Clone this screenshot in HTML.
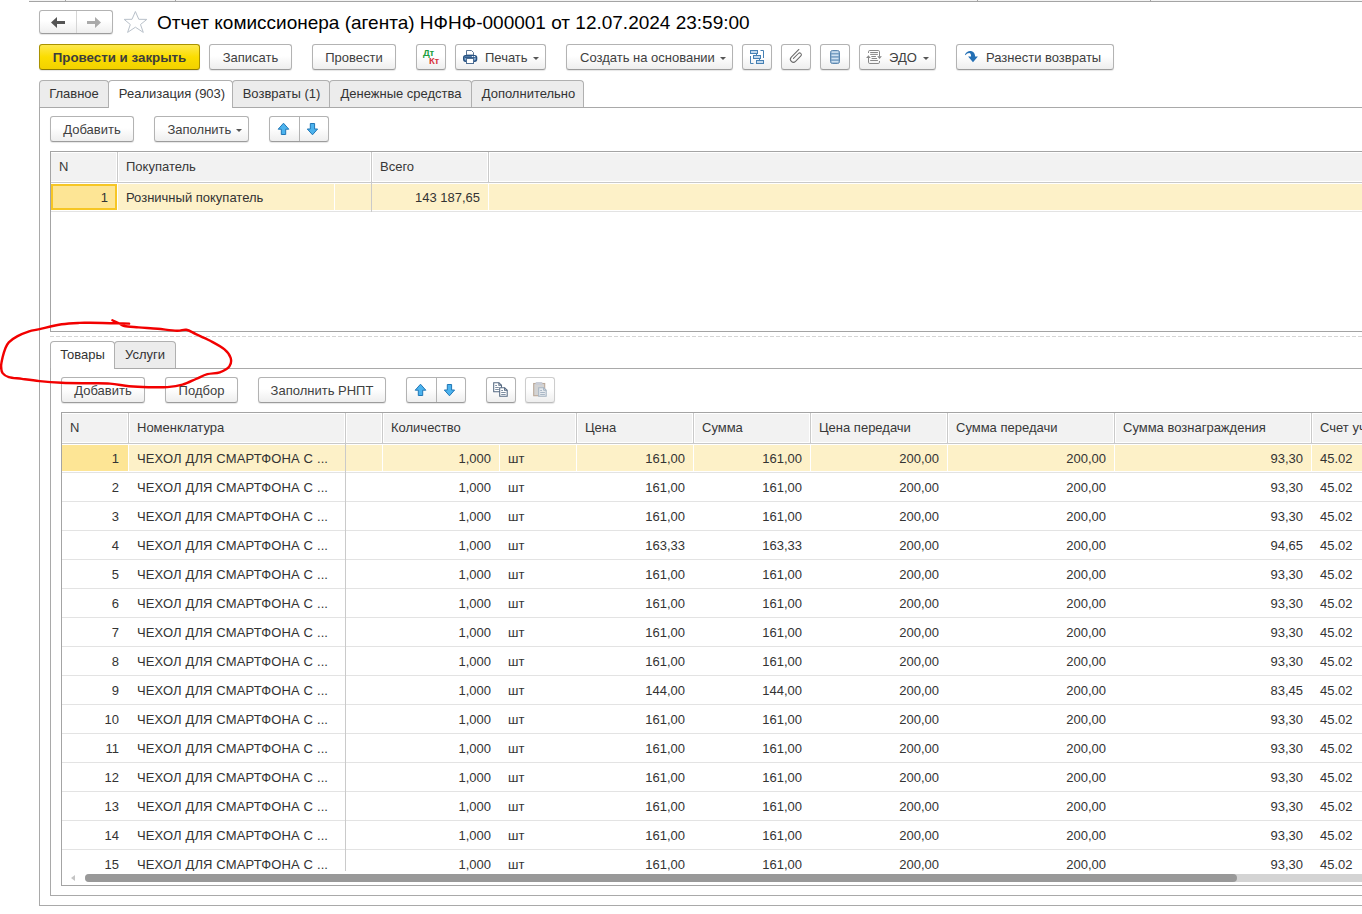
<!DOCTYPE html><html><head><meta charset="utf-8"><style>
*{margin:0;padding:0;box-sizing:border-box}
html,body{width:1362px;height:914px;overflow:hidden;background:#fff;font-family:"Liberation Sans",sans-serif;position:relative}
.a,.t,.title,.th,.td,.btn,.tab{position:absolute}
.title{font-size:19px;color:#000;line-height:24px;white-space:nowrap}
.btn{border:1px solid #b3b3b3;border-bottom-color:#9c9c9c;border-radius:3px;background:linear-gradient(#ffffff 0%,#ffffff 45%,#eeeeee 100%);box-shadow:0 1px 1px rgba(0,0,0,0.10);}
.btn span{position:absolute;left:0;right:0;top:1px;text-align:center;font-size:13px;color:#404040;line-height:24px;white-space:nowrap}
.btn.ybtn{background:linear-gradient(#fde84f 0%,#fbdd00 50%,#f2d100 100%);border-color:#a99200;border-bottom-color:#8f7b00;box-shadow:0 1px 1px rgba(0,0,0,0.10)}
.btn.ybtn span{font-weight:bold;color:#3d3d3d;font-size:13.33px;top:1px}
.btn.dis{border-color:#cdcdcd;border-bottom-color:#bdbdbd}
.btn span.dt{position:absolute;right:auto;left:6px;top:2.5px;font-size:9.5px;letter-spacing:-0.3px;line-height:10px;font-weight:bold;color:#1e9f3d;text-align:left}
.btn span.kt{position:absolute;right:auto;left:12px;top:10.5px;font-size:9.5px;letter-spacing:-0.3px;line-height:10px;font-weight:bold;color:#d8343c;text-align:left}
i.dd{position:absolute;top:12px;width:0;height:0;border-left:3px solid transparent;border-right:3px solid transparent;border-top:3px solid #555}
.tab{border:1px solid #b0b0b0;border-bottom:none;border-radius:4px 4px 0 0;background:#ececec}
.tab.act{background:#fff}
.tab span{position:absolute;left:0;right:0;top:0;text-align:center;font-size:13px;color:#333;line-height:25px;white-space:nowrap}
.th{font-size:13px;color:#383838;line-height:29px;white-space:nowrap}
.td{position:absolute;font-size:13px;color:#333;line-height:30px;white-space:nowrap}
</style></head><body>
<div class="a" style="left:29px;top:0px;width:1333px;height:1px;background:#f4f4f4;"></div>
<div class="a" style="left:29px;top:1px;width:1333px;height:1px;background:#a4a4a4;"></div>
<div class="a" style="left:65px;top:0px;width:1px;height:1px;background:#a4a4a4;"></div>
<div class="a" style="left:175px;top:0px;width:1px;height:1px;background:#a4a4a4;"></div>
<div class="a" style="left:977px;top:0px;width:1px;height:1px;background:#a4a4a4;"></div>
<div class="a" style="left:1150px;top:0px;width:1px;height:1px;background:#a4a4a4;"></div>
<div class="btn" style="left:39px;top:10px;width:74px;height:24px;"></div>
<div class="a" style="left:76px;top:11px;width:1px;height:22px;background:#d6d6d6;"></div>
<svg class="a" style="left:51px;top:17px" width="15" height="12" viewBox="0 0 15 12"><path d="M0,5.5 L6,0 L6,4 L14,4 L14,7 L6,7 L6,11 Z" fill="#555"/></svg>
<svg class="a" style="left:87px;top:17px" width="15" height="12" viewBox="0 0 15 12"><path d="M14,5.5 L8,0 L8,4 L0,4 L0,7 L8,7 L8,11 Z" fill="#aaa"/></svg>
<svg class="a" style="left:115px;top:5px" width="40" height="33" viewBox="0 0 40 33"><path d="M20.4,6.5 L23.8,14.3 L31.8,14.4 L25.5,19.5 L28.3,27.4 L20.4,22.2 L12.6,27.4 L15.3,19.5 L9.2,14.4 L17.0,14.3 Z" fill="none" stroke="#b9c1ca" stroke-width="1" stroke-linejoin="miter"/></svg>
<div class="title" style="left:157px;top:10.5px;">Отчет комиссионера (агента) НФНФ-000001 от 12.07.2024 23:59:00</div>
<div class="btn ybtn" style="left:39px;top:44px;width:161px;height:26px;"><span>Провести и закрыть</span></div>
<div class="btn" style="left:209px;top:44px;width:83px;height:26px;"><span>Записать</span></div>
<div class="btn" style="left:312px;top:44px;width:84px;height:26px;"><span>Провести</span></div>
<div class="btn" style="left:416px;top:44px;width:30px;height:26px;"><span class="dt">Дт</span><span class="kt">Кт</span></div>
<div class="btn" style="left:455px;top:44px;width:91px;height:26px;"><span style="right:auto;text-align:left;left:29px">Печать</span><i class="dd" style="left:77px"></i></div>
<svg class="a" style="left:463px;top:50px" width="15" height="15" viewBox="0 0 15 15"><path d="M3.5,0.5 H8.5 L10.5,2.5 V5 H3.5 Z" fill="#fff" stroke="#5a7595" stroke-width="1"/><rect x="0.75" y="5.75" width="12.8" height="5.4" rx="1.8" fill="#86acd3" stroke="#275282" stroke-width="1.5"/><path d="M1.8,7.4 H12.5" stroke="#275282" stroke-width="1"/><rect x="8.9" y="6.1" width="1.2" height="1" fill="#fff"/><rect x="10.9" y="6.1" width="1.2" height="1" fill="#fff"/><rect x="3.5" y="8.5" width="7" height="5" fill="#fff" stroke="#4d6d93" stroke-width="1"/></svg>
<div class="btn" style="left:566px;top:44px;width:167px;height:26px;"><span style="right:auto;text-align:left;left:13px">Создать на основании</span><i class="dd" style="left:153px"></i></div>
<div class="btn" style="left:742px;top:44px;width:30px;height:26px;"></div>
<svg class="a" style="left:749px;top:49px" width="17" height="17" viewBox="0 0 17 17"><g fill="#c4daee" stroke="#4680b3" stroke-width="1"><rect x="1.5" y="1.5" width="7" height="3"/><rect x="4.5" y="6.5" width="7" height="3"/><rect x="7.5" y="11.5" width="7" height="3"/></g><path d="M1.5,7 V14.5 H4.5 M14.5,9 V1.5 H11.5 M7.5,5 V6 M10.5,10 V11" fill="none" stroke="#4680b3" stroke-width="1"/></svg>
<div class="btn" style="left:781px;top:44px;width:30px;height:26px;"></div>
<svg class="a" style="left:787px;top:48px" width="18" height="18" viewBox="0 0 18 18"><g transform="translate(9.2,8.4) rotate(45) translate(-3.5,-7.6)"><path d="M0.5,0.8 V11.5 A3,3 0 0 0 6.5,11.5 V4 A1.75,1.75 0 0 0 3,4 V11" fill="none" stroke="#6a6a6a" stroke-width="1.05" stroke-linecap="round"/></g></svg>
<div class="btn" style="left:820px;top:44px;width:30px;height:26px;"></div>
<svg class="a" style="left:830px;top:50px" width="10" height="14" viewBox="0 0 10 14"><rect x="0.5" y="0.5" width="9" height="13" rx="2" fill="#78a0c4" stroke="#5d88b0"/><g fill="#cfe2f2"><rect x="1.5" y="1.3" width="7" height="1.6"/><rect x="1.5" y="4.5" width="7" height="1.6"/><rect x="1.5" y="7.7" width="7" height="1.6"/><rect x="1.5" y="10.9" width="7" height="1.6"/></g></svg>
<div class="btn" style="left:859px;top:44px;width:77px;height:26px;"><span style="right:auto;text-align:left;left:29px">ЭДО</span><i class="dd" style="left:63px"></i></div>
<svg class="a" style="left:862px;top:46px" width="24" height="22" viewBox="0 0 24 22"><g fill="none" stroke="#888" stroke-width="1"><path d="M6.5,7 V5.8 Q6.5,4.5 7.8,4.5 H16.2 Q17.5,4.5 17.5,5.8 V10.5"/><path d="M17.5,15 V16.2 Q17.5,17.5 16.2,17.5 H7.8 Q6.5,17.5 6.5,16.2 V11"/><path d="M8.2,6.5 H15.9 M8.2,8.4 H15.9 M9.3,10.5 H13.9 M9.6,12.5 H15 M8.2,14.5 H15.9"/></g><path d="M15.2,10.2 H19.9 L17.55,12.9 Z M4.1,11.9 H8.8 L6.45,9.2 Z" fill="#888"/></svg>
<div class="btn" style="left:956px;top:44px;width:158px;height:26px;"><span style="right:auto;text-align:left;left:29px">Разнести возвраты</span></div>
<svg class="a" style="left:960px;top:46px" width="24" height="22" viewBox="0 0 24 22"><path d="M5,8.6 C6,6 8,4.9 10.1,4.9 C13,4.9 15.1,7 15.1,10.4 L17.9,10.4 L13,16.2 L8.1,10.4 L11.1,10.4 C11.1,8 10.3,6.9 9.2,6.9 C7.8,6.9 6.5,7.8 5.6,9.2 Z" fill="#2470b5"/></svg>
<div class="a" style="left:39px;top:107px;width:1323px;height:1px;background:#a9a9a9;"></div>
<div class="tab" style="left:39px;top:80px;width:70px;height:27px"><span style="left:0px">Главное</span></div>
<div class="tab act" style="left:108px;top:80px;width:125px;height:28px"><span style="left:3px">Реализация (903)</span></div>
<div class="tab" style="left:232px;top:80px;width:98px;height:27px"><span style="left:1px">Возвраты (1)</span></div>
<div class="tab" style="left:329px;top:80px;width:143px;height:27px"><span style="left:1px">Денежные средства</span></div>
<div class="tab" style="left:471px;top:80px;width:113px;height:27px"><span style="left:2px">Дополнительно</span></div>
<div class="a" style="left:39px;top:107px;width:1px;height:799px;background:#a9a9a9;"></div>
<div class="a" style="left:39px;top:905px;width:1323px;height:1px;background:#a9a9a9;"></div>
<div class="btn" style="left:50px;top:116px;width:84px;height:26px;"><span>Добавить</span></div>
<div class="btn" style="left:154px;top:116px;width:95px;height:26px;"><span style="right:auto;text-align:left;left:12.5px">Заполнить</span><i class="dd" style="left:81px"></i></div>
<div class="btn" style="left:269px;top:116px;width:60px;height:26px;"></div>
<div class="a" style="left:299px;top:117px;width:1px;height:24px;background:#b3b3b3;"></div>
<svg class="a" style="left:0;top:0" width="1362" height="914"><path d="M283.5,123.2 L288.8,129.2 L285.7,129.2 L285.7,134.5 L281.3,134.5 L281.3,129.2 L278.2,129.2 Z" fill="#4cb3ee" stroke="#2177b6" stroke-width="1" stroke-linejoin="miter"/><path d="M310.3,123.5 L314.6,123.5 L314.6,129.0 L317.6,129.0 L312.5,134.8 L307.3,129.0 L310.3,129.0 Z" fill="#4cb3ee" stroke="#2177b6" stroke-width="1" stroke-linejoin="miter"/></svg>
<div class="a" style="left:50px;top:151px;width:1312px;height:1px;background:#a4a4a4;"></div>
<div class="a" style="left:50px;top:151px;width:1px;height:181px;background:#a4a4a4;"></div>
<div class="a" style="left:50px;top:331px;width:1312px;height:1px;background:#a4a4a4;"></div>
<div class="a" style="left:51px;top:152px;width:1311px;height:30px;background:#ffffff;"></div>
<div class="a" style="left:51px;top:153px;width:1311px;height:28px;background:#f2f2f2;"></div>
<div class="a" style="left:51px;top:182px;width:1311px;height:1px;background:#c9c9c9;"></div>
<div class="a" style="left:116px;top:152px;width:3px;height:30px;background:#ffffff;"></div>
<div class="a" style="left:117px;top:152px;width:1px;height:30px;background:#cacaca;"></div>
<div class="a" style="left:370px;top:152px;width:3px;height:30px;background:#ffffff;"></div>
<div class="a" style="left:371px;top:152px;width:1px;height:30px;background:#cacaca;"></div>
<div class="a" style="left:487px;top:152px;width:3px;height:30px;background:#ffffff;"></div>
<div class="a" style="left:488px;top:152px;width:1px;height:30px;background:#cacaca;"></div>
<div class="th" style="left:59px;top:152px;">N</div>
<div class="th" style="left:126px;top:152px;">Покупатель</div>
<div class="th" style="left:380px;top:152px;">Всего</div>
<div class="a" style="left:51px;top:184px;width:1311px;height:26px;background:#fdf1c8;"></div>
<div class="a" style="left:51px;top:211px;width:1311px;height:1px;background:#e3e3e3;"></div>
<div class="a" style="left:371px;top:183px;width:1px;height:29px;background:#cacaca;"></div>
<div class="a" style="left:334px;top:184px;width:1px;height:26px;background:#ffffff;"></div>
<div class="a" style="left:117px;top:184px;width:1px;height:26px;background:#ffffff;"></div>
<div class="a" style="left:488px;top:184px;width:1px;height:26px;background:#ffffff;"></div>
<div class="a" style="left:51px;top:184px;width:66px;height:26px;background:#fde595;border:2px solid #f6c624"></div>
<div class="td" style="right:1254px;top:183px;">1</div>
<div class="td" style="left:126px;top:183px;">Розничный покупатель</div>
<div class="td" style="right:882px;top:183px;">143 187,65</div>
<div class="a" style="left:50px;top:336px;width:1312px;height:1px;background:repeating-linear-gradient(90deg,#d5d5d5 0 4px,transparent 4px 6px)"></div>
<div class="a" style="left:50px;top:368px;width:1312px;height:1px;background:#a9a9a9;"></div>
<div class="tab act" style="left:50px;top:341px;width:65px;height:28px"><span>Товары</span></div>
<div class="tab" style="left:114px;top:341px;width:62px;height:27px"><span>Услуги</span></div>
<div class="a" style="left:50px;top:368px;width:1px;height:527px;background:#a9a9a9;"></div>
<div class="a" style="left:50px;top:895px;width:1312px;height:1px;background:#a9a9a9;"></div>
<div class="btn" style="left:61px;top:377px;width:84px;height:26px;"><span>Добавить</span></div>
<div class="btn" style="left:165px;top:377px;width:73px;height:26px;"><span>Подбор</span></div>
<div class="btn" style="left:258px;top:377px;width:128px;height:26px;"><span>Заполнить РНПТ</span></div>
<div class="btn" style="left:406px;top:377px;width:60px;height:26px;"></div>
<div class="a" style="left:436px;top:378px;width:1px;height:24px;background:#b3b3b3;"></div>
<svg class="a" style="left:0;top:0" width="1362" height="914"><path d="M420.5,384.2 L425.8,390.2 L422.7,390.2 L422.7,395.5 L418.3,395.5 L418.3,390.2 L415.2,390.2 Z" fill="#4cb3ee" stroke="#2177b6" stroke-width="1" stroke-linejoin="miter"/><path d="M447.3,384.5 L451.6,384.5 L451.6,390.0 L454.6,390.0 L449.5,395.8 L444.3,390.0 L447.3,390.0 Z" fill="#4cb3ee" stroke="#2177b6" stroke-width="1" stroke-linejoin="miter"/></svg>
<div class="btn" style="left:486px;top:377px;width:30px;height:26px;"></div>
<svg class="a" style="left:492px;top:381px" width="17" height="17" viewBox="0 0 17 17"><g stroke="#566a82" stroke-width="1.05" fill="#fff" stroke-linejoin="miter"><path d="M1.7,1.7 H6.9 L9.5,4.3 V10.7 H1.7 Z"/><path d="M6.9,1.7 V4.3 H9.5" fill="none"/><path d="M7.7,6.7 H12.6 L15.2,9.3 V15.3 H7.7 Z"/><path d="M12.6,6.7 V9.3 H15.2" fill="none"/></g><path d="M3.2,4.5 H5 M3.2,6.5 H6.8 M3.2,8.5 H6.8 M9.2,9.5 H11 M9.2,11.5 H13.7 M9.2,13.5 H13.7" stroke="#7f8fa2" stroke-width="1"/></svg>
<div class="btn dis" style="left:525px;top:377px;width:30px;height:26px;"></div>
<svg class="a" style="left:532px;top:381px" width="17" height="17" viewBox="0 0 17 17"><rect x="1.7" y="2.5" width="11" height="12.2" fill="#d3d3d3" stroke="#bba999" stroke-width="1.1"/><rect x="3.5" y="1" width="7" height="3" rx="1" fill="#c9cdd6"/><path d="M6.7,6.7 H11.6 L14.2,9.3 V15.3 H6.7 Z" fill="#e6eaee" stroke="#a8b6c4" stroke-width="1.1"/><path d="M11.6,6.7 V9.3 H14.2" fill="none" stroke="#a8b6c4" stroke-width="1"/><path d="M8.2,9.5 H10 M8.2,11.5 H12.9 M8.2,13.5 H12.9" stroke="#a9b7c6" stroke-width="1"/></svg>
<div class="a" style="left:61px;top:412px;width:1301px;height:1px;background:#a4a4a4;"></div>
<div class="a" style="left:61px;top:412px;width:1px;height:474px;background:#a4a4a4;"></div>
<div class="a" style="left:61px;top:885px;width:1301px;height:1px;background:#a4a4a4;"></div>
<div class="a" style="left:62px;top:413px;width:1300px;height:30px;background:#ffffff;"></div>
<div class="a" style="left:62px;top:414px;width:1300px;height:28px;background:#f2f2f2;"></div>
<div class="a" style="left:62px;top:443px;width:1300px;height:1px;background:#c9c9c9;"></div>
<div class="a" style="left:127px;top:413px;width:3px;height:30px;background:#ffffff;"></div>
<div class="a" style="left:128px;top:413px;width:1px;height:30px;background:#cacaca;"></div>
<div class="a" style="left:344px;top:413px;width:3px;height:30px;background:#ffffff;"></div>
<div class="a" style="left:345px;top:413px;width:1px;height:30px;background:#cacaca;"></div>
<div class="a" style="left:381px;top:413px;width:3px;height:30px;background:#ffffff;"></div>
<div class="a" style="left:382px;top:413px;width:1px;height:30px;background:#cacaca;"></div>
<div class="a" style="left:575px;top:413px;width:3px;height:30px;background:#ffffff;"></div>
<div class="a" style="left:576px;top:413px;width:1px;height:30px;background:#cacaca;"></div>
<div class="a" style="left:692px;top:413px;width:3px;height:30px;background:#ffffff;"></div>
<div class="a" style="left:693px;top:413px;width:1px;height:30px;background:#cacaca;"></div>
<div class="a" style="left:809px;top:413px;width:3px;height:30px;background:#ffffff;"></div>
<div class="a" style="left:810px;top:413px;width:1px;height:30px;background:#cacaca;"></div>
<div class="a" style="left:946px;top:413px;width:3px;height:30px;background:#ffffff;"></div>
<div class="a" style="left:947px;top:413px;width:1px;height:30px;background:#cacaca;"></div>
<div class="a" style="left:1113px;top:413px;width:3px;height:30px;background:#ffffff;"></div>
<div class="a" style="left:1114px;top:413px;width:1px;height:30px;background:#cacaca;"></div>
<div class="a" style="left:1310px;top:413px;width:3px;height:30px;background:#ffffff;"></div>
<div class="a" style="left:1311px;top:413px;width:1px;height:30px;background:#cacaca;"></div>
<div class="th" style="left:70px;top:413px;">N</div>
<div class="th" style="left:137px;top:413px;">Номенклатура</div>
<div class="th" style="left:391px;top:413px;">Количество</div>
<div class="th" style="left:585px;top:413px;">Цена</div>
<div class="th" style="left:702px;top:413px;">Сумма</div>
<div class="th" style="left:819px;top:413px;">Цена передачи</div>
<div class="th" style="left:956px;top:413px;">Сумма передачи</div>
<div class="th" style="left:1123px;top:413px;">Сумма вознаграждения</div>
<div class="th" style="left:1320px;top:413px;">Счет учета</div>
<div class="a" style="left:62px;top:444px;width:1300px;height:427px;overflow:hidden">
<div class="a" style="left:0;top:1px;width:1300px;height:26px;background:#fdf1c8"></div>
<div class="a" style="left:0;top:1px;width:66px;height:26px;background:#fde595"></div>
<div class="a" style="left:66px;top:1px;width:1px;height:26px;background:#fff"></div>
<div class="a" style="left:320px;top:1px;width:1px;height:26px;background:#fff"></div>
<div class="a" style="left:437px;top:1px;width:1px;height:26px;background:#fff"></div>
<div class="a" style="left:514px;top:1px;width:1px;height:26px;background:#fff"></div>
<div class="a" style="left:631px;top:1px;width:1px;height:26px;background:#fff"></div>
<div class="a" style="left:748px;top:1px;width:1px;height:26px;background:#fff"></div>
<div class="a" style="left:885px;top:1px;width:1px;height:26px;background:#fff"></div>
<div class="a" style="left:1052px;top:1px;width:1px;height:26px;background:#fff"></div>
<div class="a" style="left:1249px;top:1px;width:1px;height:26px;background:#fff"></div>
<div class="a" style="left:0;top:28px;width:1300px;height:1px;background:#e3e3e3"></div>
<div class="td" style="right:1243px;top:0px">1</div>
<div class="td" style="left:75px;top:0px;letter-spacing:0.13px">ЧЕХОЛ ДЛЯ СМАРТФОНА С ...</div>
<div class="td" style="right:871px;top:0px">1,000</div>
<div class="td" style="left:446px;top:0px">шт</div>
<div class="td" style="right:677px;top:0px">161,00</div>
<div class="td" style="right:560px;top:0px">161,00</div>
<div class="td" style="right:423px;top:0px">200,00</div>
<div class="td" style="right:256px;top:0px">200,00</div>
<div class="td" style="right:59px;top:0px">93,30</div>
<div class="td" style="left:1258px;top:0px">45.02</div>
<div class="a" style="left:0;top:57px;width:1300px;height:1px;background:#e3e3e3"></div>
<div class="td" style="right:1243px;top:29px">2</div>
<div class="td" style="left:75px;top:29px;letter-spacing:0.13px">ЧЕХОЛ ДЛЯ СМАРТФОНА С ...</div>
<div class="td" style="right:871px;top:29px">1,000</div>
<div class="td" style="left:446px;top:29px">шт</div>
<div class="td" style="right:677px;top:29px">161,00</div>
<div class="td" style="right:560px;top:29px">161,00</div>
<div class="td" style="right:423px;top:29px">200,00</div>
<div class="td" style="right:256px;top:29px">200,00</div>
<div class="td" style="right:59px;top:29px">93,30</div>
<div class="td" style="left:1258px;top:29px">45.02</div>
<div class="a" style="left:0;top:86px;width:1300px;height:1px;background:#e3e3e3"></div>
<div class="td" style="right:1243px;top:58px">3</div>
<div class="td" style="left:75px;top:58px;letter-spacing:0.13px">ЧЕХОЛ ДЛЯ СМАРТФОНА С ...</div>
<div class="td" style="right:871px;top:58px">1,000</div>
<div class="td" style="left:446px;top:58px">шт</div>
<div class="td" style="right:677px;top:58px">161,00</div>
<div class="td" style="right:560px;top:58px">161,00</div>
<div class="td" style="right:423px;top:58px">200,00</div>
<div class="td" style="right:256px;top:58px">200,00</div>
<div class="td" style="right:59px;top:58px">93,30</div>
<div class="td" style="left:1258px;top:58px">45.02</div>
<div class="a" style="left:0;top:115px;width:1300px;height:1px;background:#e3e3e3"></div>
<div class="td" style="right:1243px;top:87px">4</div>
<div class="td" style="left:75px;top:87px;letter-spacing:0.13px">ЧЕХОЛ ДЛЯ СМАРТФОНА С ...</div>
<div class="td" style="right:871px;top:87px">1,000</div>
<div class="td" style="left:446px;top:87px">шт</div>
<div class="td" style="right:677px;top:87px">163,33</div>
<div class="td" style="right:560px;top:87px">163,33</div>
<div class="td" style="right:423px;top:87px">200,00</div>
<div class="td" style="right:256px;top:87px">200,00</div>
<div class="td" style="right:59px;top:87px">94,65</div>
<div class="td" style="left:1258px;top:87px">45.02</div>
<div class="a" style="left:0;top:144px;width:1300px;height:1px;background:#e3e3e3"></div>
<div class="td" style="right:1243px;top:116px">5</div>
<div class="td" style="left:75px;top:116px;letter-spacing:0.13px">ЧЕХОЛ ДЛЯ СМАРТФОНА С ...</div>
<div class="td" style="right:871px;top:116px">1,000</div>
<div class="td" style="left:446px;top:116px">шт</div>
<div class="td" style="right:677px;top:116px">161,00</div>
<div class="td" style="right:560px;top:116px">161,00</div>
<div class="td" style="right:423px;top:116px">200,00</div>
<div class="td" style="right:256px;top:116px">200,00</div>
<div class="td" style="right:59px;top:116px">93,30</div>
<div class="td" style="left:1258px;top:116px">45.02</div>
<div class="a" style="left:0;top:173px;width:1300px;height:1px;background:#e3e3e3"></div>
<div class="td" style="right:1243px;top:145px">6</div>
<div class="td" style="left:75px;top:145px;letter-spacing:0.13px">ЧЕХОЛ ДЛЯ СМАРТФОНА С ...</div>
<div class="td" style="right:871px;top:145px">1,000</div>
<div class="td" style="left:446px;top:145px">шт</div>
<div class="td" style="right:677px;top:145px">161,00</div>
<div class="td" style="right:560px;top:145px">161,00</div>
<div class="td" style="right:423px;top:145px">200,00</div>
<div class="td" style="right:256px;top:145px">200,00</div>
<div class="td" style="right:59px;top:145px">93,30</div>
<div class="td" style="left:1258px;top:145px">45.02</div>
<div class="a" style="left:0;top:202px;width:1300px;height:1px;background:#e3e3e3"></div>
<div class="td" style="right:1243px;top:174px">7</div>
<div class="td" style="left:75px;top:174px;letter-spacing:0.13px">ЧЕХОЛ ДЛЯ СМАРТФОНА С ...</div>
<div class="td" style="right:871px;top:174px">1,000</div>
<div class="td" style="left:446px;top:174px">шт</div>
<div class="td" style="right:677px;top:174px">161,00</div>
<div class="td" style="right:560px;top:174px">161,00</div>
<div class="td" style="right:423px;top:174px">200,00</div>
<div class="td" style="right:256px;top:174px">200,00</div>
<div class="td" style="right:59px;top:174px">93,30</div>
<div class="td" style="left:1258px;top:174px">45.02</div>
<div class="a" style="left:0;top:231px;width:1300px;height:1px;background:#e3e3e3"></div>
<div class="td" style="right:1243px;top:203px">8</div>
<div class="td" style="left:75px;top:203px;letter-spacing:0.13px">ЧЕХОЛ ДЛЯ СМАРТФОНА С ...</div>
<div class="td" style="right:871px;top:203px">1,000</div>
<div class="td" style="left:446px;top:203px">шт</div>
<div class="td" style="right:677px;top:203px">161,00</div>
<div class="td" style="right:560px;top:203px">161,00</div>
<div class="td" style="right:423px;top:203px">200,00</div>
<div class="td" style="right:256px;top:203px">200,00</div>
<div class="td" style="right:59px;top:203px">93,30</div>
<div class="td" style="left:1258px;top:203px">45.02</div>
<div class="a" style="left:0;top:260px;width:1300px;height:1px;background:#e3e3e3"></div>
<div class="td" style="right:1243px;top:232px">9</div>
<div class="td" style="left:75px;top:232px;letter-spacing:0.13px">ЧЕХОЛ ДЛЯ СМАРТФОНА С ...</div>
<div class="td" style="right:871px;top:232px">1,000</div>
<div class="td" style="left:446px;top:232px">шт</div>
<div class="td" style="right:677px;top:232px">144,00</div>
<div class="td" style="right:560px;top:232px">144,00</div>
<div class="td" style="right:423px;top:232px">200,00</div>
<div class="td" style="right:256px;top:232px">200,00</div>
<div class="td" style="right:59px;top:232px">83,45</div>
<div class="td" style="left:1258px;top:232px">45.02</div>
<div class="a" style="left:0;top:289px;width:1300px;height:1px;background:#e3e3e3"></div>
<div class="td" style="right:1243px;top:261px">10</div>
<div class="td" style="left:75px;top:261px;letter-spacing:0.13px">ЧЕХОЛ ДЛЯ СМАРТФОНА С ...</div>
<div class="td" style="right:871px;top:261px">1,000</div>
<div class="td" style="left:446px;top:261px">шт</div>
<div class="td" style="right:677px;top:261px">161,00</div>
<div class="td" style="right:560px;top:261px">161,00</div>
<div class="td" style="right:423px;top:261px">200,00</div>
<div class="td" style="right:256px;top:261px">200,00</div>
<div class="td" style="right:59px;top:261px">93,30</div>
<div class="td" style="left:1258px;top:261px">45.02</div>
<div class="a" style="left:0;top:318px;width:1300px;height:1px;background:#e3e3e3"></div>
<div class="td" style="right:1243px;top:290px">11</div>
<div class="td" style="left:75px;top:290px;letter-spacing:0.13px">ЧЕХОЛ ДЛЯ СМАРТФОНА С ...</div>
<div class="td" style="right:871px;top:290px">1,000</div>
<div class="td" style="left:446px;top:290px">шт</div>
<div class="td" style="right:677px;top:290px">161,00</div>
<div class="td" style="right:560px;top:290px">161,00</div>
<div class="td" style="right:423px;top:290px">200,00</div>
<div class="td" style="right:256px;top:290px">200,00</div>
<div class="td" style="right:59px;top:290px">93,30</div>
<div class="td" style="left:1258px;top:290px">45.02</div>
<div class="a" style="left:0;top:347px;width:1300px;height:1px;background:#e3e3e3"></div>
<div class="td" style="right:1243px;top:319px">12</div>
<div class="td" style="left:75px;top:319px;letter-spacing:0.13px">ЧЕХОЛ ДЛЯ СМАРТФОНА С ...</div>
<div class="td" style="right:871px;top:319px">1,000</div>
<div class="td" style="left:446px;top:319px">шт</div>
<div class="td" style="right:677px;top:319px">161,00</div>
<div class="td" style="right:560px;top:319px">161,00</div>
<div class="td" style="right:423px;top:319px">200,00</div>
<div class="td" style="right:256px;top:319px">200,00</div>
<div class="td" style="right:59px;top:319px">93,30</div>
<div class="td" style="left:1258px;top:319px">45.02</div>
<div class="a" style="left:0;top:376px;width:1300px;height:1px;background:#e3e3e3"></div>
<div class="td" style="right:1243px;top:348px">13</div>
<div class="td" style="left:75px;top:348px;letter-spacing:0.13px">ЧЕХОЛ ДЛЯ СМАРТФОНА С ...</div>
<div class="td" style="right:871px;top:348px">1,000</div>
<div class="td" style="left:446px;top:348px">шт</div>
<div class="td" style="right:677px;top:348px">161,00</div>
<div class="td" style="right:560px;top:348px">161,00</div>
<div class="td" style="right:423px;top:348px">200,00</div>
<div class="td" style="right:256px;top:348px">200,00</div>
<div class="td" style="right:59px;top:348px">93,30</div>
<div class="td" style="left:1258px;top:348px">45.02</div>
<div class="a" style="left:0;top:405px;width:1300px;height:1px;background:#e3e3e3"></div>
<div class="td" style="right:1243px;top:377px">14</div>
<div class="td" style="left:75px;top:377px;letter-spacing:0.13px">ЧЕХОЛ ДЛЯ СМАРТФОНА С ...</div>
<div class="td" style="right:871px;top:377px">1,000</div>
<div class="td" style="left:446px;top:377px">шт</div>
<div class="td" style="right:677px;top:377px">161,00</div>
<div class="td" style="right:560px;top:377px">161,00</div>
<div class="td" style="right:423px;top:377px">200,00</div>
<div class="td" style="right:256px;top:377px">200,00</div>
<div class="td" style="right:59px;top:377px">93,30</div>
<div class="td" style="left:1258px;top:377px">45.02</div>
<div class="a" style="left:0;top:434px;width:1300px;height:1px;background:#e3e3e3"></div>
<div class="td" style="right:1243px;top:406px">15</div>
<div class="td" style="left:75px;top:406px;letter-spacing:0.13px">ЧЕХОЛ ДЛЯ СМАРТФОНА С ...</div>
<div class="td" style="right:871px;top:406px">1,000</div>
<div class="td" style="left:446px;top:406px">шт</div>
<div class="td" style="right:677px;top:406px">161,00</div>
<div class="td" style="right:560px;top:406px">161,00</div>
<div class="td" style="right:423px;top:406px">200,00</div>
<div class="td" style="right:256px;top:406px">200,00</div>
<div class="td" style="right:59px;top:406px">93,30</div>
<div class="td" style="left:1258px;top:406px">45.02</div>
<div class="a" style="left:283px;top:0;width:1px;height:427px;background:#cacaca"></div>
</div>
<div class="a" style="left:85px;top:874px;width:1277px;height:8px;background:#d4d4d4;border-radius:4px 0 0 4px"></div>
<div class="a" style="left:85px;top:874px;width:1152px;height:8px;background:#999999;border-radius:4px"></div>
<svg class="a" style="left:70px;top:874px" width="6" height="8" viewBox="0 0 6 8"><path d="M1,4 L5,1 V7 Z" fill="#c4c4c4"/></svg>
<svg class="a" style="left:0;top:0" width="1362" height="914" viewBox="0 0 1362 914"><path d="M129.1,323.6 C125.9,323.5 116.5,323.3 110.0,323.2 C103.5,323.1 95.1,322.9 90.0,322.8 C84.9,322.8 84.0,322.6 79.3,322.9 C74.6,323.1 68.3,323.3 61.7,324.3 C55.1,325.3 45.0,327.9 39.6,329.1 C34.2,330.3 32.8,330.1 29.1,331.3 C25.4,332.5 21.0,334.3 17.6,336.1 C14.2,337.9 10.9,340.2 8.8,342.3 C6.8,344.4 6.3,346.0 5.3,348.5 C4.3,351.0 3.3,354.4 2.6,357.3 C1.9,360.2 1.1,363.5 1.1,366.1 C1.1,368.7 1.3,371.3 2.6,373.1 C3.9,374.9 5.6,376.1 8.8,377.1 C12.0,378.1 16.9,378.2 22.0,378.9 C27.1,379.6 33.0,380.5 39.6,381.1 C46.2,381.8 53.6,382.4 61.7,382.8 C69.8,383.2 80.0,383.2 88.1,383.3 C96.1,383.4 103.2,383.1 110.0,383.6 C116.8,384.1 122.7,385.7 129.1,386.3 C135.5,386.9 141.8,387.1 148.2,387.2 C154.6,387.3 161.6,387.5 167.3,387.1 C173.0,386.7 177.7,386.1 182.5,384.7 C187.3,383.3 191.8,380.8 195.9,379.0 C200.1,377.2 203.4,375.3 207.4,374.2 C211.4,373.1 216.2,373.6 219.8,372.3 C223.5,371.0 227.5,368.9 229.3,366.5 C231.1,364.1 231.5,360.9 230.7,358.0 C229.9,355.1 227.9,352.3 224.5,349.4 C221.1,346.5 215.0,343.4 210.2,340.8 C205.4,338.2 199.9,335.9 195.9,334.1 C191.9,332.3 189.6,330.4 186.4,329.8 C183.2,329.2 181.6,330.9 176.8,330.7 C172.0,330.5 164.1,329.4 157.7,328.8 C151.3,328.2 144.2,327.9 138.6,327.4 C133.0,326.9 127.5,326.6 124.3,326.0 C121.1,325.4 121.5,324.6 119.5,323.6 C117.5,322.6 113.6,320.8 112.4,320.2" fill="none" stroke="#f20000" stroke-width="2.4" stroke-linecap="round" stroke-linejoin="round"/></svg>
</body></html>
